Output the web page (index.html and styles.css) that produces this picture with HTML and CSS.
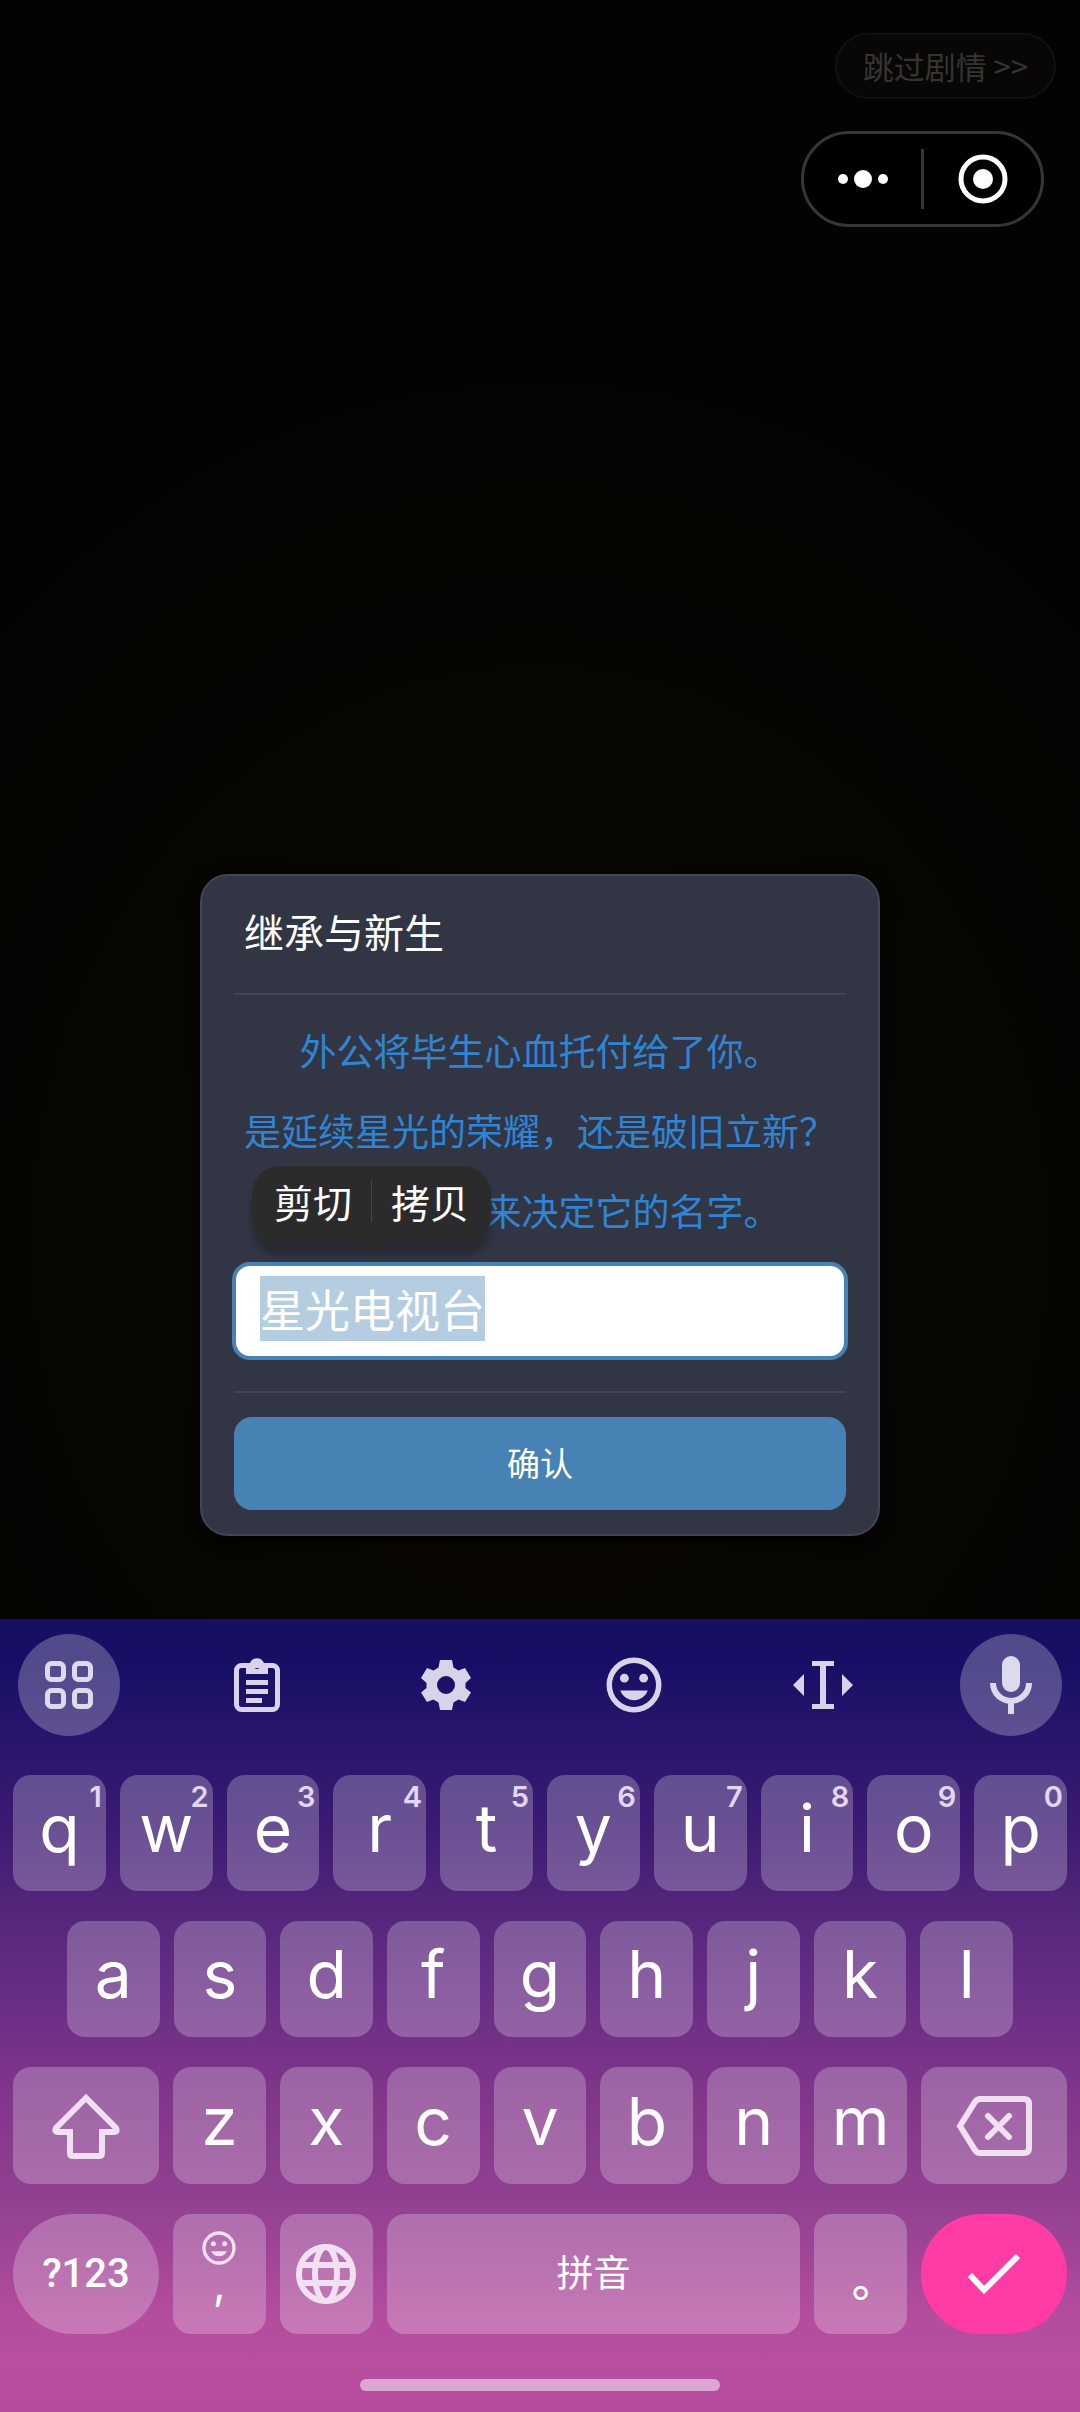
FILE: index.html
```html
<!DOCTYPE html>
<html lang="zh-CN">
<head>
<meta charset="utf-8">
<meta name="viewport" content="width=device-width, initial-scale=1">
<title>继承与新生</title>
<link rel="stylesheet" href="styles.css">
</head>
<body>
<div class="screen">
  <header class="topbar">
    <button class="skip" type="button">跳过剧情 &gt;&gt;</button>
    <div class="capsule">
      <button class="capsule-btn" type="button" aria-label="更多">
        <svg width="52" height="20" viewBox="0 0 52 20" fill="#fff"><circle cx="6" cy="10" r="5"/><circle cx="26" cy="10" r="9"/><circle cx="46" cy="10" r="5"/></svg>
      </button>
      <span class="capsule-line"></span>
      <button class="capsule-btn" type="button" aria-label="关闭">
        <svg width="50" height="50" viewBox="0 0 50 50"><circle cx="25" cy="25" r="22" fill="none" stroke="#fff" stroke-width="5"/><circle cx="25" cy="25" r="10" fill="#fff"/></svg>
      </button>
    </div>
  </header>

  <main class="stage">
    <form class="dialog" onsubmit="return false">
      <h1 class="dialog-title">继承与新生</h1>
      <p class="dialog-text"><label for="station">外公将毕生心血托付给了你。<br>是延续星光的荣耀，还是破旧立新？<br><span class="covered-line">来决定它的名字。</span></label></p>
      <div class="field">
        <input class="field-input" id="station" type="text" value="星光电视台" autocomplete="off" autofocus>
        <div class="popup">
          <button class="popup-btn" type="button">剪切</button>
          <span class="popup-line"></span>
          <button class="popup-btn" type="button">拷贝</button>
        </div>
      </div>
      <div class="dialog-actions">
        <button class="confirm" type="submit">确认</button>
      </div>
    </form>
  </main>

  <section class="keyboard" aria-label="键盘">
    <div class="tools">
      <button class="tool tool-round" type="button" aria-label="菜单">
        <svg width="48" height="48" viewBox="0 0 48 48" fill="none" stroke="currentColor" stroke-width="5"><rect x="2.500" y="2.500" width="16" height="16" rx="4"/><rect x="29.500" y="2.500" width="16" height="16" rx="4"/><rect x="2.500" y="29.500" width="16" height="16" rx="4"/><rect x="29.500" y="29.500" width="16" height="16" rx="4"/></svg>
      </button>
      <button class="tool" type="button" aria-label="剪贴板">
        <svg width="48" height="56" viewBox="0 0 48 56" fill="currentColor"><path d="M8.500 8.500h31a5 5 0 0 1 5 5v34a5 5 0 0 1-5 5h-31a5 5 0 0 1-5-5v-34a5 5 0 0 1 5-5z" fill="none" stroke="currentColor" stroke-width="5"/><path fill-rule="evenodd" d="M13 17V6h4a7.500 7.500 0 0 1 14 0h4v11zM24 6a3 3 0 1 0 0 6 3 3 0 0 0 0-6z"/><path d="M13 23h22v5H13zM13 32h22v5H13zM13 41h16v5H13z"/></svg>
      </button>
      <button class="tool" type="button" aria-label="设置">
        <svg width="50" height="50" viewBox="0 0 50 50" fill="currentColor"><path fill-rule="evenodd" d="M19 0h12l1.500 7.500 5 3L44 8l6 10-5.500 5v5L50 32.500 44 42l-6.500-2.500-5 3L31 50H19l-1.500-7.500-5-3L6 42 0 32.500 5.500 28v-5L0 18 6 8l6.500 2.500 5-3zM25 16a9 9 0 1 0 0 18 9 9 0 0 0 0-18z"/></svg>
      </button>
      <button class="tool" type="button" aria-label="表情">
        <svg width="66" height="66" viewBox="0 0 24 24" fill="currentColor"><path d="M12 2a10 10 0 1 0 0 20 10 10 0 0 0 0-20zm0 18a8 8 0 1 1 0-16 8 8 0 0 1 0 16z"/><circle cx="8.500" cy="9.500" r="1.600"/><circle cx="15.500" cy="9.500" r="1.600"/><path d="M7 14h10c-.8 2.100-2.700 3.500-5 3.500S7.800 16.100 7 14z"/></svg>
      </button>
      <button class="tool" type="button" aria-label="光标">
        <svg width="60" height="48" viewBox="0 0 60 48" fill="currentColor"><path d="M19 0h22v5h-8v38h8v5H19v-5h8V5h-8zM11 13v22L0 24zM49 13v22l11-11z"/></svg>
      </button>
      <button class="tool tool-round" type="button" aria-label="语音">
        <svg width="42" height="58" viewBox="0 0 42 58"><rect x="12" y="0" width="18" height="36" rx="9" fill="currentColor"/><path d="M3 27a18 18 0 0 0 36 0M21 45v13" fill="none" stroke="currentColor" stroke-width="6"/></svg>
      </button>
    </div>

    <div class="row row-ten">
      <button class="key" type="button">q<span class="hint">1</span></button>
      <button class="key" type="button">w<span class="hint">2</span></button>
      <button class="key" type="button">e<span class="hint">3</span></button>
      <button class="key" type="button">r<span class="hint">4</span></button>
      <button class="key" type="button">t<span class="hint">5</span></button>
      <button class="key" type="button">y<span class="hint">6</span></button>
      <button class="key" type="button">u<span class="hint">7</span></button>
      <button class="key" type="button">i<span class="hint">8</span></button>
      <button class="key" type="button">o<span class="hint">9</span></button>
      <button class="key" type="button">p<span class="hint">0</span></button>
    </div>
    <div class="row row-nine">
      <button class="key" type="button">a</button>
      <button class="key" type="button">s</button>
      <button class="key" type="button">d</button>
      <button class="key" type="button">f</button>
      <button class="key" type="button">g</button>
      <button class="key" type="button">h</button>
      <button class="key" type="button">j</button>
      <button class="key" type="button">k</button>
      <button class="key" type="button">l</button>
    </div>
    <div class="row row-wide">
      <button class="key key-icon" type="button" aria-label="上档">
        <svg width="68" height="66" viewBox="0 0 68 66" fill="none" stroke="currentColor" stroke-width="6"><path d="M34 5L4 35q-2 4 2 4h12v21q0 3 3 3h26q3 0 3-3V39h12q4 0 2-4z"/></svg>
      </button>
      <button class="key" type="button">z</button>
      <button class="key" type="button">x</button>
      <button class="key" type="button">c</button>
      <button class="key" type="button">v</button>
      <button class="key" type="button">b</button>
      <button class="key" type="button">n</button>
      <button class="key" type="button">m</button>
      <button class="key key-icon" type="button" aria-label="删除">
        <svg width="76" height="60" viewBox="0 0 76 60" fill="none" stroke="currentColor" stroke-width="6"><path d="M4 30L19 6q2-3 5-3h44q5 0 5 5v44q0 5-5 5H24q-3 0-5-3z"/><path d="M32 20l21 21M53 20L32 41" stroke-linecap="round"/></svg>
      </button>
    </div>
    <div class="row row-wide row-last">
      <button class="key key-round key-mode" type="button">?123</button>
      <button class="key key-comma" type="button">
        <svg width="40" height="40" viewBox="0 0 24 24" fill="currentColor"><path d="M12 2a10 10 0 1 0 0 20 10 10 0 0 0 0-20zm0 18a8 8 0 1 1 0-16 8 8 0 0 1 0 16z"/><circle cx="8.600" cy="9.500" r="1.500"/><circle cx="15.400" cy="9.500" r="1.500"/><path d="M7.300 14h9.400c-.8 1.900-2.500 3-4.700 3s-3.900-1.100-4.700-3z"/></svg>
        <span>,</span>
      </button>
      <button class="key key-icon" type="button" aria-label="切换语言">
        <svg width="60" height="60" viewBox="0 0 60 60" fill="none" stroke="currentColor" stroke-width="6"><circle cx="30" cy="30" r="27"/><ellipse cx="30" cy="30" rx="11" ry="27"/><path d="M5 21h50M5 39h50"/></svg>
      </button>
      <button class="key key-space" type="button">拼音</button>
      <button class="key key-stop" type="button" lang="zh-TW">。</button>
      <button class="key key-round key-enter" type="button" aria-label="完成">
        <svg width="52" height="42" viewBox="0 0 52 42" fill="none" stroke="currentColor" stroke-width="6"><path d="M2 22l14 15L50 3"/></svg>
      </button>
    </div>
    <div class="handle"></div>
  </section>
</div>
<script>
  const station = document.getElementById('station');
  station.focus();
  station.select();
</script>
</body>
</html>
```

FILE: styles.css
```css
* {
  box-sizing: border-box;
}

body {
  margin: 0;
  background: #040301;
  font-family: "Noto Sans CJK SC", sans-serif;
}

button,
input {
  margin: 0;
  padding: 0;
  border: 0;
  background: none;
  color: inherit;
  font: inherit;
}

button {
  display: flex;
  align-items: center;
  justify-content: center;
}

svg {
  display: block;
  flex: none;
}

.screen {
  display: flex;
  flex-direction: column;
  min-height: 100vh;
  background: radial-gradient(ellipse 800px 900px at 50% 1240px, #0c0904, #040301);
}

/* top controls */
.topbar {
  display: flex;
  flex-direction: column;
  align-items: flex-end;
  gap: 32px;
  padding: 33px 24px 0;
}

.skip {
  height: 66px;
  padding: 0 26px 2px;
  border: 2px solid #12110f;
  border-radius: 33px;
  background: #080705;
  color: #363432;
  font-size: 31px;
}

.capsule {
  display: flex;
  align-items: center;
  width: 243px;
  height: 96px;
  margin-right: 12px;
  border: 3px solid #363636;
  border-radius: 48px;
  background: #000;
}

.capsule-btn {
  flex: 1;
  height: 100%;
}

.capsule-line {
  width: 3px;
  height: 60px;
  background: #363636;
}

/* dialog */
.stage {
  display: flex;
  flex: 1;
  align-items: flex-end;
  justify-content: center;
  padding: 32px 24px 83px;
}

.dialog {
  width: 100%;
  max-width: 680px;
  padding: 0 32px 24px;
  border: 2px solid #424552;
  border-radius: 28px;
  background: #323644;
  box-shadow: 0 4px 16px #000;
}

.dialog-title {
  margin: 0;
  padding: 25px 10px 32px;
  border-bottom: 2px solid #424552;
  color: #fff;
  font-size: 40px;
  font-weight: 400;
  line-height: 60px;
}

.dialog-text {
  margin: 15px -12px 12px;
  color: #2f84d4;
  font-size: 37px;
  line-height: 80px;
  text-align: center;
}

/* starts where the edit menu ends */
.covered-line {
  padding-left: 5em;
}

.field {
  position: relative;
  margin: 0 -2px 31px;
}

.field-input {
  display: block;
  width: 100%;
  height: 98px;
  padding: 0 24px 6px;
  border: 4px solid #4682b4;
  border-radius: 18px;
  outline: 0;
  background: #fff;
  color: #fff;
  font-size: 45px;
  line-height: 60px;
}

.field-input::selection {
  background: #b5cde1;
  color: #fff;
}

.popup {
  position: absolute;
  bottom: calc(100% + 18px);
  left: 20px;
  display: flex;
  align-items: center;
  padding: 0 3px 8px;
  border-radius: 28px;
  background: #2b2b2b;
  box-shadow: 0 12px 6px rgba(38, 40, 48, .8);
}

.popup::after {
  position: absolute;
  top: 100%;
  left: 50%;
  width: 20px;
  height: 9px;
  margin-left: -10px;
  background: #2b2b2b;
  clip-path: polygon(0 0, 100% 0, 50% 100%);
  content: "";
}

.popup-btn {
  padding: 0 19px;
  color: #fff;
  font-size: 39px;
  line-height: 70px;
}

.popup-line {
  width: 1px;
  height: 42px;
  background: #454545;
}

.dialog-actions {
  padding-top: 24px;
  border-top: 2px solid #424552;
}

.confirm {
  width: 100%;
  height: 93px;
  padding-bottom: 4px;
  border-radius: 18px;
  background: #4682b4;
  color: #fff;
  font-size: 33px;
}

/* keyboard */
.keyboard {
  display: flex;
  flex-direction: column;
  gap: 30px;
  padding: 15px 13px 21px;
  background: linear-gradient(#170f61, #170f66 6%, #2a156c 15%, #3b1a72 26%, #52267b 36%, #6d2f86 50%, #84378b 62%, #8f4090 72%, #a04597 80%, #b44d9e 88%, #b84f9f 94%, #b74c9f);
  color: #fff;
}

.tools {
  display: flex;
  justify-content: space-between;
  margin-bottom: 9px;
  padding: 0 5px;
  color: #d8d3e8;
}

.tool {
  width: 102px;
  height: 102px;
}

.tool-round {
  border-radius: 50%;
  background: rgba(255, 255, 255, .25);
  color: #dedaee;
}

.row {
  display: grid;
  gap: 14px;
}

.row-ten {
  grid-template-columns: repeat(10, 1fr);
}

.row-nine {
  grid-template-columns: repeat(9, 1fr);
  padding: 0 54px;
}

.row-wide {
  grid-template-columns: 11fr repeat(7, 7fr) 11fr;
}

.key {
  position: relative;
  min-width: 0;
  height: 116px;
  padding-bottom: 10px;
  border-radius: 18px;
  background: rgba(255, 255, 255, .24);
  font-family: Inter, "Noto Sans CJK SC", sans-serif;
  font-size: 66px;
  line-height: 80px;
}

.row-wide .key {
  height: 117px;
}

.hint {
  position: absolute;
  top: 7px;
  right: 4px;
  color: #e2d6f2;
  font-size: 29px;
  font-weight: 600;
  line-height: 30px;
}

.key-icon {
  padding: 0;
  color: #f1dff2;
}

.row-last .key {
  height: 120px;
}

.key-round {
  padding: 0;
  border-radius: 60px;
}

.key-mode {
  font-family: Roboto, sans-serif;
  font-size: 40px;
  font-weight: 500;
}

.key-comma {
  flex-direction: column;
  justify-content: flex-start;
  padding: 14px 0 0;
  font-size: 44px;
  line-height: 30px;
}

.key-comma svg {
  color: #f9dff6;
}

.key-space {
  grid-column: span 4;
  padding: 0;
  font-size: 37px;
}

.key-stop {
  padding: 32px 0 0;
  font-family: "Noto Sans CJK TC", sans-serif;
  font-size: 46px;
  font-weight: 500;
}

.key-enter {
  background: #ff3ca6;
}

.handle {
  width: 360px;
  height: 12px;
  margin: 15px auto 0;
  border-radius: 6px;
  background: #dca6d2;
}
```
